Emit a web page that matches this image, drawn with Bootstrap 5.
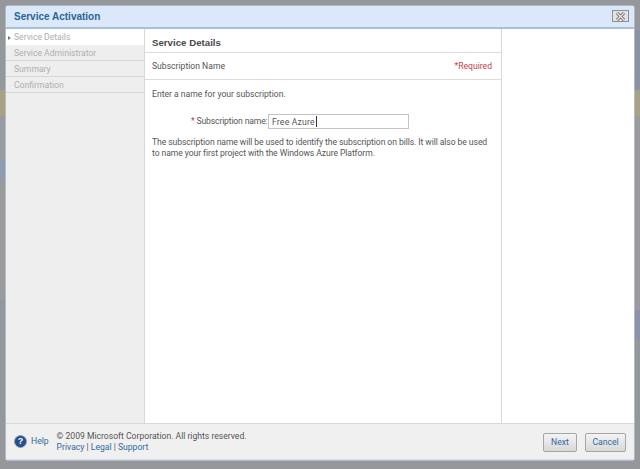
<!DOCTYPE html>
<html lang="en">
<head>
    <meta charset="UTF-8">
    <title>Service Activation</title>
    <link href="https://cdn.jsdelivr.net/npm/bootstrap@5.3.0/dist/css/bootstrap.min.css" rel="stylesheet">
    <style>
        html, body { height: 469px; overflow: hidden; }
        body {
            padding: 6px 6px 9px 6px;
            background-color: #96979b;
            background-image:
                linear-gradient(#96979b 0 90px, #a8a184 90px 116px, #9a9ba0 116px 160px, #8f9bb0 160px 178px, #9b9b9b 178px 300px, #9497a0 300px 340px, #96979b 340px),
                linear-gradient(#96979b 0 30px, #8b93a3 30px 90px, #a8a184 90px 116px, #9b9b9b 116px 310px, #8c93a8 310px 340px, #96979b 340px);
            background-size: 6px 469px, 6px 469px;
            background-position: left top, right top;
            background-repeat: no-repeat;
            font-family: Roboto, "Liberation Sans", sans-serif;
            font-size: 8.6px;
            line-height: 11px;
            color: #555;
        }
        .dlg {
            height: 454px;
            background: #fff;
            border-radius: 2px;
            overflow: hidden;
            box-shadow: 0 0 0 1px rgba(190, 208, 235, .6);
        }
        .dlg-title {
            height: 23px;
            padding: 0 5px 0 8px;
            background: #dbe8fa;
            border-bottom: 2px solid #a9bfd8;
            color: #2a6399;
            font-family: "Liberation Sans", sans-serif;
            font-size: 10px;
            font-weight: 700;
        }
        .dlg-close {
            width: 17px;
            height: 12px;
            margin-top: -1px;
            background: #e2e2e2;
            border: 1px solid #8f8f8f;
        }
        .dlg-body { height: 394px; }
        .steps { width: 139px; background: #eee; border-right: 1px solid #d8d8d8; }
        .step {
            height: 16px;
            padding-left: 8px;
            color: #aeaeae;
            border-bottom: 1px solid #d6d6d6;
            line-height: 17px;
        }
        .step-on { background: #fff; border-bottom: 0; position: relative; }
        .step-on::before {
            content: "";
            position: absolute;
            left: 2px;
            top: 7px;
            border-left: 3px solid #777;
            border-top: 2px solid transparent;
            border-bottom: 2px solid transparent;
        }
        .mid { width: 357px; border-right: 1px solid #d8d8d8; }
        .mid-head {
            height: 24px;
            padding: 8px 8px 0 7px;
            font-family: "Liberation Sans", sans-serif;
            font-size: 9.7px;
            font-weight: 700;
            color: #4a4a4a;
            border-bottom: 1px solid #dcdcdc;
        }
        .mid-sub {
            height: 27px;
            padding: 1px 9px 0 7px;
            border-bottom: 1px solid #dcdcdc;
        }
        .req { color: #c4404c; }
        .name-row { margin-top: 14px; padding-left: 46px; }
        .name-label { width: 77px; white-space: nowrap; letter-spacing: -.15px; }
        .name-wrap { position: relative; }
        .name-wrap::after {
            content: "";
            position: absolute;
            left: 48px;
            top: 2px;
            width: 1px;
            height: 11px;
            background: #333;
        }
        .name-input {
            display: block;
            width: 141px;
            height: 15px;
            padding: 0 3px;
            border: 1px solid #c4c4c4;
            font: inherit;
            letter-spacing: .2px;
            color: #555;
            outline: 0;
        }
        .txt { padding-left: 7px; white-space: nowrap; }
        .txt-top { margin-top: 9px; }
        .txt-para { margin-top: 8px; letter-spacing: -.08px; }
        .dlg-foot {
            height: 37px;
            background: #f0f0f0;
            border-top: 1px solid #d8d8d8;
            border-bottom: 1px solid #d5e0ee;
            padding: 0 8px 0 8px;
        }
        .dlg-foot a { color: #2f6a9e; text-decoration: none; }
        .help-mark {
            width: 13px;
            height: 13px;
            border-radius: 50%;
            background: #24508f;
            border: 1px solid #8a9cb8;
            color: #fff;
            font-family: "Liberation Sans", sans-serif;
            font-size: 9px;
            font-weight: 700;
            line-height: 11px;
            text-align: center;
        }
        .help-link { margin: 0 8px 0 4px; }
        .foot-btns { gap: 8px; margin-top: 1px; }
        .foot-btn {
            height: 19px;
            padding: 0;
            border: 1px solid #a5a5a5;
            border-radius: 2px;
            background: linear-gradient(#f4f4f4, #d8d8d8);
            color: #2f6a9e;
            font: inherit;
            line-height: 15px;
        }
        .foot-next { width: 34px; }
        .foot-cancel { width: 41px; }
    </style>
</head>
<body>
    <div class="dlg d-flex flex-column">
        <div class="dlg-title d-flex align-items-center justify-content-between">
            <span>Service Activation</span>
            <span class="dlg-close d-flex align-items-center justify-content-center">
                <svg width="11" height="9" viewBox="0 0 11 9">
                    <path d="M2 1 9 8M9 1 2 8" stroke="#666" stroke-width="3" fill="none"/>
                    <path d="M2 1 9 8M9 1 2 8" stroke="#eee" stroke-width="1.2" fill="none"/>
                </svg>
            </span>
        </div>
        <div class="dlg-body d-flex">
            <div class="steps flex-shrink-0">
                <div class="step step-on">Service Details</div>
                <div class="step">Service Administrator</div>
                <div class="step">Summary</div>
                <div class="step">Confirmation</div>
            </div>
            <div class="mid flex-shrink-0">
                <div class="mid-head">Service Details</div>
                <div class="mid-sub d-flex align-items-center justify-content-between">
                    <span>Subscription Name</span>
                    <span class="req">*Required</span>
                </div>
                <div class="txt txt-top">Enter a name for your subscription.</div>
                <div class="name-row d-flex align-items-center">
                    <span class="name-label"><span class="req">*</span> Subscription name:</span>
                    <span class="name-wrap"><input class="name-input" type="text" value="Free Azure"></span>
                </div>
                <div class="txt txt-para">The subscription name will be used to identify the subscription on bills. It will also be used<br>to name your first project with the Windows Azure Platform.</div>
            </div>
            <div class="flex-grow-1"></div>
        </div>
        <div class="dlg-foot d-flex align-items-center justify-content-between">
            <div class="d-flex align-items-center">
                <span class="help-mark flex-shrink-0">?</span>
                <a href="#" class="help-link">Help</a>
                <div>
                    <div>&copy; 2009 Microsoft Corporation. All rights reserved.</div>
                    <div><a href="#">Privacy</a> | <a href="#">Legal</a> | <a href="#">Support</a></div>
                </div>
            </div>
            <div class="foot-btns d-flex">
                <button class="foot-btn foot-next" type="button">Next</button>
                <button class="foot-btn foot-cancel" type="button">Cancel</button>
            </div>
        </div>
    </div>
    <script src="https://cdn.jsdelivr.net/npm/bootstrap@5.3.0/dist/js/bootstrap.bundle.min.js"></script>
</body>
</html>
